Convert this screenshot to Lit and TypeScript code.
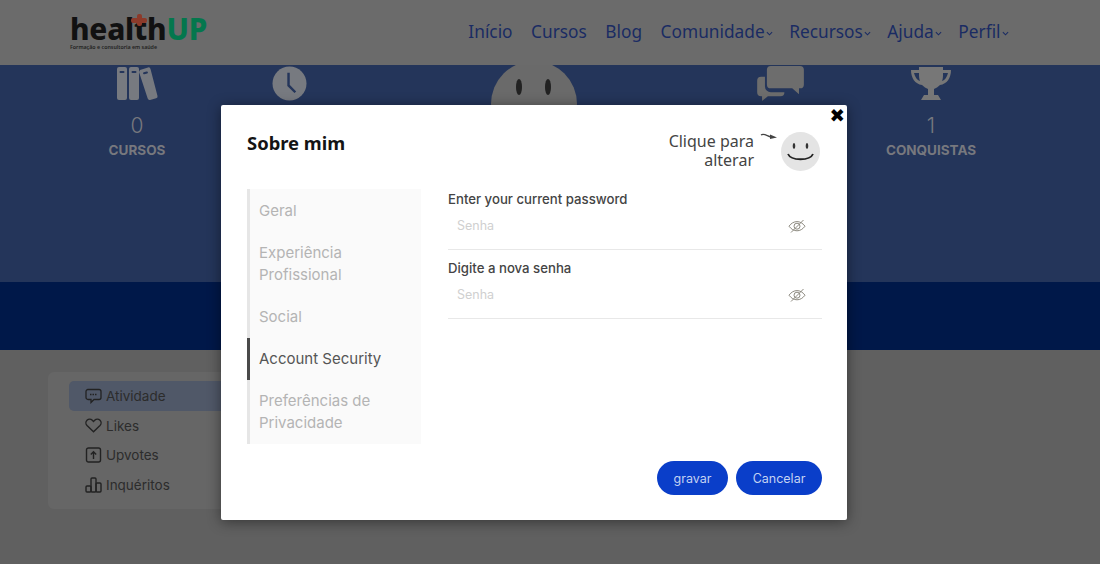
import { LitElement, html, css } from "lit";
import { customElement } from "lit/decorators.js";

const chev = html`<svg class="chev" viewBox="0 0 8 5" width="7" height="5"><path d="M1 1l3 3 3-3" fill="none" stroke="#1a2b63" stroke-width="1.2"/></svg>`;
const eye = html`<svg viewBox="0 0 18 16" width="18" height="16" fill="none" stroke="#8d8a80" stroke-width="1"><path d="M1 8.200c2.200-3 5-4.600 8-4.600s5.800 1.600 8 4.600c-2.200 3-5 4.600-8 4.600s-5.800-1.600-8-4.600z"/><circle cx="9" cy="8.200" r="3"/><path d="M3 14.500L15.500 2"/></svg>`;

@customElement("app-root")
export class AppRoot extends LitElement {
  static styles = css`
    :host { display: block; width: 1100px; height: 568px; position: relative; overflow: hidden; background: #fff; font-family: "Inter", "Open Sans", sans-serif; }
    .page { height: 564px; display: flex; flex-direction: column; background: #606060; }
    header { height: 65px; flex: none; background: #6b6b6b; display: flex; align-items: center; padding: 0 93.500px 0 70px; justify-content: space-between; box-sizing: border-box; }
    .logo { display: flex; flex-direction: column; margin-top: -1px; }
    .logo-main { font: 800 29.700px/30px "Noto Sans", sans-serif; letter-spacing: -0.200px; color: #111; position: relative; }
    .logo-main b { color: #04774d; font-weight: 800; }
    .logo-main i { position: absolute; left: 61px; top: 4px; width: 16px; height: 5px; background: #8c3a2a; border-radius: 2px; }
    .logo-main i::after { content: ""; position: absolute; left: 5.500px; top: -4px; width: 5px; height: 12px; background: #8c3a2a; border-radius: 2px; }
    .logo small { font: 600 5.300px/7px "Noto Sans", sans-serif; color: #222; }
    nav { display: flex; align-items: center; gap: 18.500px; font: 400 17.300px/24px "Noto Sans", sans-serif; color: #1a2b63; margin-top: -2px; }
    nav span { display: flex; align-items: center; }
    .chev { margin: 3px -2px 0 1px; }
    .banner { height: 217px; flex: none; background: #24355a; overflow: hidden; display: grid; grid-template-columns: 200px 104px 386px 108px 192px; padding-left: 37px; align-content: start; }
    .stat { display: flex; flex-direction: column; align-items: center; }
    .stat .ico { height: 36px; display: flex; align-items: flex-end; }
    .num { font: 300 21px/26px "Inter", sans-serif; margin-top: 12px; color: #77787e; }
    .lab { font: 700 13.500px/18px "Inter", sans-serif; margin-top: 2px; color: #77787e; }
    .face { width: 86px; height: 86px; border-radius: 50%; background: #6a6a6a; margin-top: -4px; position: relative; }
    .face::before, .face::after { content: ""; position: absolute; top: 18px; width: 6px; height: 16px; border-radius: 50%; background: #222; }
    .face::before { left: 25px; } .face::after { left: 54px; }
    .band { height: 68px; flex: none; background: #001849; }
    .body { flex: 1; padding: 22px 0 0 48px; }
    .side { width: 190px; height: 137px; background: #666; border-radius: 6px; padding: 9px 0 0 21px; box-sizing: border-box; }
    .side div { height: 29.600px; display: flex; align-items: center; gap: 4px; padding-left: 16px; font: 400 13.500px/18px "Inter", sans-serif; color: #2c2c2c; border-radius: 5px 0 0 5px; }
    .side div span { position: relative; top: 0.500px; }
    .side div.on { background: #505868; }
    .side svg { flex: none; }
    .overlay { position: absolute; left: 221px; top: 105px; width: 626px; height: 415px; background: #fff; border-radius: 2px; box-shadow: 0 2px 14px rgba(0,0,0,.45); box-sizing: border-box; padding: 0 25px 0 26px; display: flex; flex-direction: column; }
    .close { position: absolute; right: 2px; top: 2px; font: 700 18.500px/18px "DejaVu Sans", sans-serif; color: #000; }
    .top { height: 84px; display: flex; justify-content: space-between; align-items: flex-start; padding-top: 26px; box-sizing: border-box; flex: none; }
    h2 { margin: 0; font: 700 18.400px/24px "Noto Sans", sans-serif; color: #141414; }
    .change { display: flex; align-items: flex-start; margin: 1px 2px 0 0; }
    .change p { margin: 0; text-align: right; font: 400 16px/19px "Noto Sans", sans-serif; color: #444; }
    .arrow { margin: 1px 3px 0 6px; }
    .av { width: 39px; height: 39px; display: block; }
    .main { display: flex; flex: none; height: 255px; }
    .tabs { width: 174px; height: 255px; flex: none; background: #fafafa; border-left: 3px solid #e6e6e6; box-sizing: border-box; padding-top: 1px; }
    .tabs div { padding: 10px 10px 10px 9px; font: 400 15px/22px "Inter", sans-serif; color: #b4b4b4; margin-left: -3px; border-left: 3px solid transparent; }
    .tabs div.on { color: #555; border-left-color: #4a4a4a; }
    .form { flex: 1; margin-left: 27px; min-width: 0; padding-top: 1px; }
    .field { height: 69px; }
    label { display: block; font: 500 13.200px/18px "Inter", sans-serif; color: #444; }
    .inp { height: 42px; box-sizing: border-box; border-bottom: 1px solid #e8e8e8; display: flex; align-items: center; justify-content: space-between; padding: 0 16px 6px 9px; font: 400 12.500px/16px "Inter", sans-serif; color: #d0d0d0; }
    .btns { display: flex; justify-content: flex-end; gap: 8px; margin-top: 17px; }
    .btn { height: 34px; border-radius: 17px; background: #0a3ec9; color: #c4d2f2; font: 400 12.500px/35px "Inter", sans-serif; text-align: center; }
    .b1 { width: 71px; } .b2 { width: 86px; }
  `;
  render() {
    return html`
      <div class="page">
        <header>
          <div class="logo"><div class="logo-main">health<b>UP</b><i></i></div><small>Formação e consultoria em saúde</small></div>
          <nav>
            <span>Início</span><span>Cursos</span><span>Blog</span>
            <span>Comunidade${chev}</span><span>Recursos${chev}</span><span>Ajuda${chev}</span><span>Perfil${chev}</span>
          </nav>
        </header>
        <section class="banner">
          <div class="stat"><div class="ico"><svg width="42" height="35" viewBox="0 0 42 35"><g fill="#777a80"><rect x="1" y="1" width="10" height="33" rx="2"/><rect x="13" y="1" width="10" height="33" rx="2"/><path d="M24 4l8-2.500a2 2 0 0 1 2.500 1.400l7 27a2 2 0 0 1-1.400 2.400l-6 1.700a2 2 0 0 1-2.400-1.400L23 6z"/></g><g fill="#24355a"><rect x="3.500" y="5" width="5" height="2" rx="1"/><rect x="15.500" y="5" width="5" height="2" rx="1"/><rect x="27" y="6" width="5" height="2" rx="1" transform="rotate(-16 29 7)"/></g></svg></div><div class="num">0</div><div class="lab">CURSOS</div></div>
          <div class="stat"><div class="ico"><svg width="35" height="35" viewBox="0 0 36 36"><circle cx="18" cy="18" r="17.500" fill="#777a80"/><path d="M17 7v13l7 7" fill="none" stroke="#24355a" stroke-width="2.500"/></svg></div></div>
          <div class="stat"><div class="face"></div></div>
          <div class="stat"><div class="ico"><svg width="49" height="36" viewBox="0 -1 50 37" fill="#6d6d6d"><path d="M14 0h30a4 4 0 0 1 4 4v15a4 4 0 0 1-4 4h-1v6l-7-6H14a4 4 0 0 1-4-4V4a4 4 0 0 1 4-4z"/><path d="M8 11v10a6 6 0 0 0 6 6h14a4 4 0 0 1-4 4H11l-6 5v-5H4a4 4 0 0 1-4-4V15a4 4 0 0 1 4-4z"/></svg></div></div>
          <div class="stat"><div class="ico"><svg width="40" height="34" viewBox="0 0 40 34" fill="#777"><path d="M8 0h24v3h8c0 8-4 14-11 15-2 2-4 3-6 4v6h4l3 5H10l3-5h4v-6c-2-1-4-2-6-4C4 17 0 11 0 3h8z"/><path d="M3 6c1 4 3 7 6 8-1-2-1-5-1-8zM37 6c-1 4-3 7-6 8 1-2 1-5 1-8z" fill="#24355a"/></svg></div><div class="num">1</div><div class="lab">CONQUISTAS</div></div>
        </section>
        <div class="band"></div>
        <section class="body">
          <div class="side">
            <div class="on"><svg width="17" height="16" viewBox="0 0 17 16" fill="none" stroke="#222" stroke-width="1.300"><path d="M3 1.500h11a2 2 0 0 1 2 2v6a2 2 0 0 1-2 2H9l-3 3v-3H3a2 2 0 0 1-2-2v-6a2 2 0 0 1 2-2z"/><path d="M5 6.500h7" stroke-dasharray="1.500 1"/></svg><span>Atividade</span></div>
            <div><svg width="17" height="15" viewBox="0 0 17 15" fill="none" stroke="#222" stroke-width="1.400"><path d="M8.500 13.800L2 7.500a3.800 3.800 0 0 1 0-5.300 3.800 3.800 0 0 1 5.300 0l1.200 1.200 1.200-1.200a3.800 3.800 0 0 1 5.300 0 3.800 3.800 0 0 1 0 5.300z"/></svg><span>Likes</span></div>
            <div><svg width="17" height="16" viewBox="0 0 17 16" fill="none" stroke="#222" stroke-width="1.400"><rect x="1.500" y="1" width="14" height="14" rx="2"/><path d="M8.500 12V5M5.800 7.500l2.700-2.700 2.700 2.700"/></svg><span>Upvotes</span></div>
            <div><svg width="17" height="16" viewBox="0 0 17 16" fill="none" stroke="#222" stroke-width="1.400"><rect x="1" y="9" width="5" height="6" rx="1"/><rect x="6" y="1" width="5" height="14" rx="1"/><rect x="11" y="6" width="5" height="9" rx="1"/></svg><span>Inquéritos</span></div>
          </div>
        </section>
      </div>
      <div class="overlay" role="dialog">
        <div class="close">✖</div>
        <div class="top">
          <h2>Sobre mim</h2>
          <div class="change">
            <p>Clique para<br>alterar</p>
            <svg class="arrow" width="18" height="10" viewBox="0 0 18 10"><path d="M1 2c3-2 6 1 10 2" fill="none" stroke="#444" stroke-width="1.300"/><path d="M10 1.500l7 3-7 1.500z" fill="#444"/></svg>
            <svg class="av" viewBox="0 0 39 39"><circle cx="19.500" cy="19.500" r="19.500" fill="#e4e4e4"/><ellipse cx="13" cy="14" rx="1.300" ry="3" fill="#333"/><ellipse cx="26" cy="14" rx="1.300" ry="3" fill="#333"/><path d="M7 22c3 7 22 7 25 0" fill="none" stroke="#222" stroke-width="1.800"/></svg>
          </div>
        </div>
        <div class="main">
          <div class="tabs">
            <div>Geral</div><div>Experiência Profissional</div><div>Social</div><div class="on">Account Security</div><div>Preferências de Privacidade</div>
          </div>
          <div class="form">
            <div class="field"><label>Enter your current password</label><div class="inp">Senha${eye}</div></div>
            <div class="field"><label>Digite a nova senha</label><div class="inp">Senha${eye}</div></div>
          </div>
        </div>
        <div class="btns"><div class="btn b1">gravar</div><div class="btn b2">Cancelar</div></div>
      </div>
    `;
  }
}
